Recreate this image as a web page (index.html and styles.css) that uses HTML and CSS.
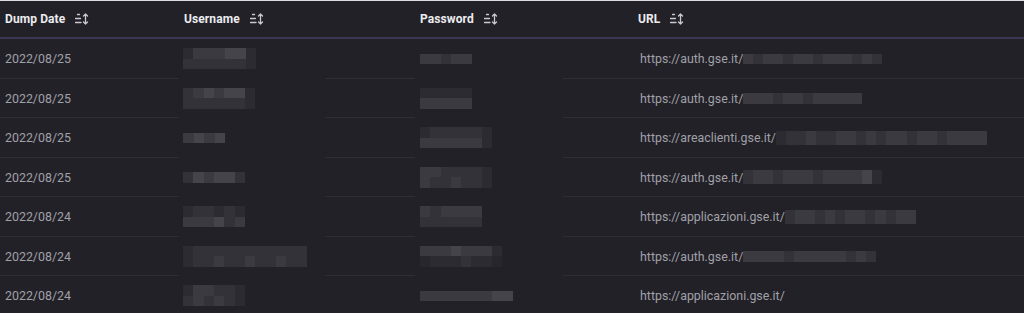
FILE: index.html
```html
<!DOCTYPE html>
<html>
<head>
<meta charset="utf-8">
<link rel="stylesheet" href="styles.css">
</head>
<body>
<div class="topline"></div>
<div class="table">
  <div class="thead">
    <div class="th">Dump Date <svg class="sort" viewBox="0 0 14 12" width="14" height="12"><path d="M2.5 1.5h2M0.5 5.5h5M0.5 9.5h5.5M10.5 1v10M8.5 3l2-2 2 2M8.5 9l2 2 2-2"/></svg></div>
    <div class="th">Username <svg class="sort" viewBox="0 0 14 12" width="14" height="12"><path d="M2.5 1.5h2M0.5 5.5h5M0.5 9.5h5.5M10.5 1v10M8.5 3l2-2 2 2M8.5 9l2 2 2-2"/></svg></div>
    <div class="th">Password <svg class="sort" viewBox="0 0 14 12" width="14" height="12"><path d="M2.5 1.5h2M0.5 5.5h5M0.5 9.5h5.5M10.5 1v10M8.5 3l2-2 2 2M8.5 9l2 2 2-2"/></svg></div>
    <div class="th">URL <svg class="sort" viewBox="0 0 14 12" width="14" height="12"><path d="M2.5 1.5h2M0.5 5.5h5M0.5 9.5h5.5M10.5 1v10M8.5 3l2-2 2 2M8.5 9l2 2 2-2"/></svg></div>
  </div>

  <div class="tr">
    <div class="td c-date">2022/08/25</div>
    <div class="td c-user"><div class="mosaic w73"><div class="mr"><i class="s1"></i><i class="s3"></i><i class="s3"></i><i class="s3"></i><i class="s4"></i><i class="s4"></i><i class="s1"></i></div><div class="mr"><i class="s2"></i><i class="s2"></i><i class="s2"></i><i class="s2"></i><i class="s2"></i><i class="s2"></i><i class="s1"></i></div></div></div>
    <div class="td c-pass"><div class="mosaic w52"><div class="mr"><i class="s3"></i><i class="s3"></i><i class="s2"></i><i class="s3"></i><i class="s3"></i></div></div></div>
    <div class="td c-url">https://auth.gse.it/<div class="mosaic w139"><div class="mr"><i class="s3"></i><i class="s2"></i><i class="s3"></i><i class="s3"></i><i class="s2"></i><i class="s3"></i><i class="s3"></i><i class="s2"></i><i class="s3"></i><i class="s3"></i><i class="s3"></i><i class="s2"></i><i class="s3"></i><i class="s2"></i></div></div></div>
  </div>

  <div class="tr">
    <div class="td c-date">2022/08/25</div>
    <div class="td c-user"><div class="mosaic w72"><div class="mr"><i class="s2"></i><i class="s3"></i><i class="s4"></i><i class="s3"></i><i class="s4"></i><i class="s4"></i><i class="s1"></i></div><div class="mr"><i class="s2"></i><i class="s2"></i><i class="s2"></i><i class="s2"></i><i class="s2"></i><i class="s2"></i><i class="s1"></i></div></div></div>
    <div class="td c-pass"><div class="mosaic w52"><div class="mr"><i class="s1"></i><i class="s1"></i><i class="s1"></i><i class="s1"></i><i class="s1"></i></div><div class="mr"><i class="s3"></i><i class="s3"></i><i class="s3"></i><i class="s3"></i><i class="s3"></i></div></div></div>
    <div class="td c-url">https://auth.gse.it/<div class="mosaic w119"><div class="mr"><i class="s3"></i><i class="s3"></i><i class="s3"></i><i class="s2"></i><i class="s3"></i><i class="s3"></i><i class="s2"></i><i class="s3"></i><i class="s3"></i><i class="s3"></i><i class="s3"></i><i class="s3"></i></div></div></div>
  </div>

  <div class="tr">
    <div class="td c-date">2022/08/25</div>
    <div class="td c-user"><div class="mosaic w42"><div class="mr"><i class="s3"></i><i class="s4"></i><i class="s3"></i><i class="s4"></i></div></div></div>
    <div class="td c-pass"><div class="mosaic w72"><div class="mr"><i class="s1"></i><i class="s2"></i><i class="s2"></i><i class="s2"></i><i class="s2"></i><i class="s2"></i><i class="s1"></i></div><div class="mr"><i class="s3"></i><i class="s3"></i><i class="s3"></i><i class="s3"></i><i class="s3"></i><i class="s3"></i><i class="s1"></i></div></div></div>
    <div class="td c-url">https://areaclienti.gse.it/<div class="mosaic w211 tall"><div class="mr"><i class="s1"></i><i class="s2"></i><i class="s2"></i><i class="s3"></i><i class="s2"></i><i class="s2"></i><i class="s3"></i><i class="s3"></i><i class="s2"></i><i class="s3"></i><i class="s2"></i><i class="s3"></i><i class="s3"></i><i class="s2"></i><i class="s3"></i><i class="s3"></i><i class="s2"></i><i class="s3"></i><i class="s3"></i><i class="s3"></i><i class="s3"></i></div></div></div>
  </div>

  <div class="tr">
    <div class="td c-date">2022/08/25</div>
    <div class="td c-user"><div class="mosaic w62"><div class="mr"><i class="s2"></i><i class="s4"></i><i class="s3"></i><i class="s4"></i><i class="s4"></i><i class="s2"></i></div></div></div>
    <div class="td c-pass"><div class="mosaic w72"><div class="mr"><i class="s3"></i><i class="s3"></i><i class="s2"></i><i class="s2"></i><i class="s2"></i><i class="s2"></i><i class="s1"></i></div><div class="mr"><i class="s3"></i><i class="s2"></i><i class="s2"></i><i class="s3"></i><i class="s2"></i><i class="s2"></i><i class="s1"></i></div></div></div>
    <div class="td c-url">https://auth.gse.it/<div class="mosaic w139 tall"><div class="mr"><i class="s2"></i><i class="s3"></i><i class="s3"></i><i class="s2"></i><i class="s3"></i><i class="s3"></i><i class="s3"></i><i class="s2"></i><i class="s3"></i><i class="s3"></i><i class="s3"></i><i class="s3"></i><i class="s4"></i><i class="s1"></i></div></div></div>
  </div>

  <div class="tr">
    <div class="td c-date">2022/08/24</div>
    <div class="td c-user"><div class="mosaic w62"><div class="mr"><i class="s1"></i><i class="s2"></i><i class="s2"></i><i class="s1"></i><i class="s2"></i><i class="s1"></i></div><div class="mr"><i class="s3"></i><i class="s3"></i><i class="s3"></i><i class="s4"></i><i class="s2"></i><i class="s3"></i></div></div></div>
    <div class="td c-pass"><div class="mosaic w62"><div class="mr"><i class="s3"></i><i class="s2"></i><i class="s3"></i><i class="s3"></i><i class="s3"></i><i class="s3"></i></div><div class="mr"><i class="s2"></i><i class="s2"></i><i class="s2"></i><i class="s2"></i><i class="s2"></i><i class="s2"></i></div></div></div>
    <div class="td c-url">https://applicazioni.gse.it/<div class="mosaic w131 tall"><div class="mr"><i class="s2"></i><i class="s3"></i><i class="s3"></i><i class="s2"></i><i class="s3"></i><i class="s2"></i><i class="s3"></i><i class="s3"></i><i class="s2"></i><i class="s3"></i><i class="s2"></i><i class="s3"></i><i class="s3"></i></div></div></div>
  </div>

  <div class="tr">
    <div class="td c-date">2022/08/24</div>
    <div class="td c-user"><div class="mosaic w124"><div class="mr"><i class="s1"></i><i class="s2"></i><i class="s2"></i><i class="s2"></i><i class="s2"></i><i class="s2"></i><i class="s2"></i><i class="s2"></i><i class="s2"></i><i class="s2"></i><i class="s2"></i><i class="s2"></i></div><div class="mr"><i class="s1"></i><i class="s2"></i><i class="s2"></i><i class="s3"></i><i class="s2"></i><i class="s2"></i><i class="s3"></i><i class="s2"></i><i class="s2"></i><i class="s3"></i><i class="s2"></i><i class="s2"></i></div></div></div>
    <div class="td c-pass"><div class="mosaic w82"><div class="mr"><i class="s3"></i><i class="s3"></i><i class="s3"></i><i class="s4"></i><i class="s3"></i><i class="s3"></i><i class="s3"></i><i class="s1"></i></div><div class="mr"><i class="s0"></i><i class="s1"></i><i class="s1"></i><i class="s1"></i><i class="s2"></i><i class="s1"></i><i class="s1"></i><i class="s0"></i></div></div></div>
    <div class="td c-url">https://auth.gse.it/<div class="mosaic w133"><div class="mr"><i class="s3"></i><i class="s3"></i><i class="s3"></i><i class="s3"></i><i class="s2"></i><i class="s3"></i><i class="s3"></i><i class="s3"></i><i class="s3"></i><i class="s3"></i><i class="s2"></i><i class="s3"></i><i class="s2"></i></div></div></div>
  </div>

  <div class="tr">
    <div class="td c-date">2022/08/24</div>
    <div class="td c-user"><div class="mosaic w62"><div class="mr"><i class="s1"></i><i class="s3"></i><i class="s3"></i><i class="s2"></i><i class="s2"></i><i class="s1"></i></div><div class="mr"><i class="s2"></i><i class="s3"></i><i class="s2"></i><i class="s3"></i><i class="s2"></i><i class="s1"></i></div></div></div>
    <div class="td c-pass"><div class="mosaic w93"><div class="mr"><i class="s3"></i><i class="s3"></i><i class="s3"></i><i class="s3"></i><i class="s3"></i><i class="s3"></i><i class="s3"></i><i class="s4"></i><i class="s4"></i></div></div></div>
    <div class="td c-url">https://applicazioni.gse.it/</div>
  </div>
</div>
</body>
</html>
```

FILE: styles.css
```css
html, body {
  margin: 0;
  padding: 0;
  background: #222128;
  height: 100%;
  overflow: hidden;
}

.topline {
  height: 1px;
  background: #dcdcde;
}

.table {
  font-family: Roboto, "Liberation Sans", Arial, sans-serif;
  font-size: 12.4px;
}

.thead,
.tr {
  display: grid;
  grid-template-columns: 179px 236px 218px 1fr;
}

.thead {
  height: 36px;
  border-bottom: 2px solid #3a3852;
}

.th {
  display: flex;
  align-items: center;
  gap: 10px;
  padding-left: 5px;
  color: #ececef;
  font-size: 12px;
  font-weight: 700;
  letter-spacing: 0.1px;
}

.sort {
  fill: none;
  stroke: #c9c9ce;
  stroke-width: 1.3;
  stroke-linecap: round;
  stroke-linejoin: round;
}

.tr {
  height: 39.5px;
}

.td {
  display: flex;
  align-items: center;
  padding-left: 5px;
  color: #a0a0a7;
  white-space: nowrap;
  background-repeat: no-repeat;
  background-position: right bottom;
  background-image: linear-gradient(#2e2d38, #2e2d38);
  background-size: 100% 1px;
}

.c-user {
  padding-left: 4px;
  background-size: 90px 1px;
}

.c-pass {
  background-size: 70px 1px;
}

.c-url {
  padding-left: 7px;
}

.mosaic {
  display: flex;
  flex-direction: column;
  flex: none;
}

.mr {
  display: flex;
  height: 10.5px;
}

.mosaic.tall .mr {
  height: 14px;
}

.mr i {
  flex: 1;
}

.s0 { background: #27262d; }
.s1 { background: #2c2b32; }
.s2 { background: #333239; }
.s3 { background: #3b3a41; }
.s4 { background: #45444b; }

.w42 { width: 42px; }
.w52 { width: 52px; }
.w62 { width: 62px; }
.w72 { width: 72px; }
.w73 { width: 73px; }
.w82 { width: 82px; }
.w93 { width: 93px; }
.w119 { width: 119px; }
.w124 { width: 124px; }
.w131 { width: 131px; }
.w133 { width: 133px; }
.w139 { width: 139px; }
.w211 { width: 211px; }
```
